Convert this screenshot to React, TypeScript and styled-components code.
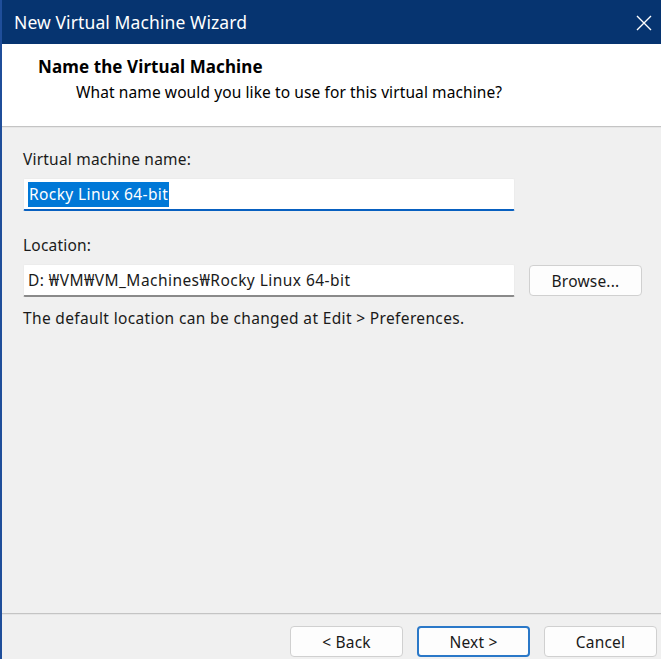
import { createGlobalStyle, styled } from "styled-components"

const GlobalStyle = createGlobalStyle`
    html, body {
        margin: 0;
        padding: 0;
        background: #f0f0f0;
    }
    * {
        box-sizing: border-box;
    }
`

const Window = styled.div`
    width: 661px;
    height: 659px;
    display: flex;
    flex-direction: column;
    background: #f0f0f0;
    border-left: 2px solid #1f4e9a;
    font-family: "Noto Sans", "Open Sans", sans-serif;
    color: #1a1a1a;
    overflow: hidden;
`

const TitleBar = styled.div`
    height: 44px;
    flex-shrink: 0;
    display: flex;
    align-items: center;
    justify-content: space-between;
    padding: 0 9px 0 12px;
    background: #063470;
    color: #ffffff;
    font-size: 17.5px;
    letter-spacing: 0.1px;
`

const CloseIcon = styled.svg`
    width: 16px;
    height: 16px;
    margin-top: 1px;
`

const Header = styled.div`
    height: 82px;
    flex-shrink: 0;
    background: #ffffff;
    padding: 12px 0 0 36px;
    display: flex;
    flex-direction: column;
    gap: 5px;
`

const HeaderTitle = styled.div`
    font-size: 17px;
    font-weight: 700;
    line-height: 21px;
    letter-spacing: 0.1px;
    color: #000000;
`

const HeaderSub = styled.div`
    font-size: 15.5px;
    line-height: 20px;
    letter-spacing: 0.1px;
    padding-left: 38px;
    color: #000000;
`

const Divider = styled.div`
    height: 2px;
    flex-shrink: 0;
    background: #c4c4c4;
    border-bottom: 1px solid #e6e6e6;
`

const Body = styled.div`
    flex: 1;
    padding: 21px 19px 0 21px;
    display: flex;
    flex-direction: column;
    font-size: 15.5px;
    letter-spacing: 0.2px;
`

const Label = styled.div<{ $gap?: number }>`
    line-height: 20px;
    margin-top: ${p => p.$gap ?? 0}px;
    margin-bottom: 9px;
`

const Row = styled.div`
    display: flex;
    align-items: center;
    gap: 14px;
`

const TextBox = styled.div<{ $focused?: boolean }>`
    width: 492px;
    height: 33px;
    background: #ffffff;
    border: 1px solid #ececec;
    border-bottom: 2px solid ${p => (p.$focused ? "#0860c0" : "#8a8a8a")};
    border-radius: 2px;
    display: flex;
    align-items: center;
    padding: 0 4px;
    white-space: nowrap;
`

const PathText = styled.span`
    letter-spacing: 0.45px;
`

const Selected = styled.span`
    background: #0078d7;
    color: #ffffff;
    padding: 1px 1px 2px 1px;
    letter-spacing: 0.4px;
`

const Note = styled.div`
    line-height: 20px;
    margin-top: 11px;
    letter-spacing: 0.35px;
`

const Footer = styled.div`
    height: 44px;
    flex-shrink: 0;
    display: flex;
    justify-content: flex-end;
    align-items: flex-start;
    gap: 14px;
    padding: 11px 4px 0 0;
`

const Button = styled.button<{ $primary?: boolean }>`
    width: 113px;
    height: 31px;
    border-radius: 4px;
    background: #fdfdfd;
    border: ${p => (p.$primary ? "2px solid #2a78c8" : "1px solid #d0d0d0")};
    font-family: inherit;
    font-size: 15.5px;
    letter-spacing: 0.2px;
    color: #1a1a1a;
    padding: 0;
`

const App = () => {
    return (
        <>
            <GlobalStyle />
            <Window>
                <TitleBar>
                    <span>New Virtual Machine Wizard</span>
                    <CloseIcon viewBox="0 0 16 16">
                        <path d="M1 1 L15 15 M15 1 L1 15" stroke="#ffffff" strokeWidth="1.4" />
                    </CloseIcon>
                </TitleBar>
                <Header>
                    <HeaderTitle>Name the Virtual Machine</HeaderTitle>
                    <HeaderSub>What name would you like to use for this virtual machine?</HeaderSub>
                </Header>
                <Divider />
                <Body>
                    <Label>Virtual machine name:</Label>
                    <TextBox $focused>
                        <Selected>Rocky Linux 64-bit</Selected>
                    </TextBox>
                    <Label $gap={24}>Location:</Label>
                    <Row>
                        <TextBox>
                            <PathText>D: ₩VM₩VM_Machines₩Rocky Linux 64-bit</PathText>
                        </TextBox>
                        <Button>Browse...</Button>
                    </Row>
                    <Note>The default location can be changed at Edit &gt; Preferences.</Note>
                </Body>
                <Divider />
                <Footer>
                    <Button>&lt; Back</Button>
                    <Button $primary>Next &gt;</Button>
                    <Button>Cancel</Button>
                </Footer>
            </Window>
        </>
    )
}

export default App
